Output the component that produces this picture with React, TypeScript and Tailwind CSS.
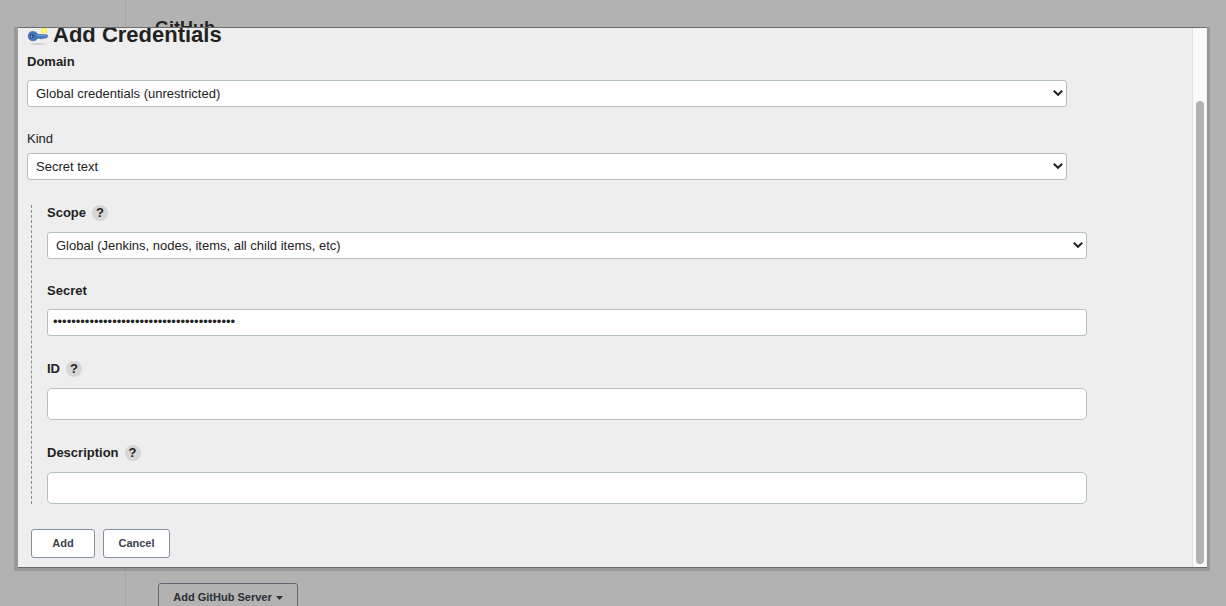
import React from 'react';

interface HelpButtonProps {
  topic: string;
}

const HelpButton: React.FC<HelpButtonProps> = ({ topic }) => (
  <button
    type="button"
    aria-label={`Help for feature: ${topic}`}
    className="w-4 h-4 rounded-full bg-[#d6d6d6] text-[13px] leading-4 font-bold text-center"
  >
    ?
  </button>
);

interface SelectFieldProps {
  id: string;
  options: string[];
}

const SelectField: React.FC<SelectFieldProps> = ({ id, options }) => (
  <div className="relative">
    <select
      id={id}
      className="block w-full h-[27px] appearance-none rounded-[3px] border border-[#b3bfc5] bg-white pl-2 pr-6 text-[13px] leading-4"
    >
      {options.map(option => (
        <option key={option}>{option}</option>
      ))}
    </select>
    <svg
      className="pointer-events-none absolute right-1 top-[10px] w-[10px] h-[7px]"
      viewBox="0 0 10 7"
      fill="none"
      stroke="#222"
      strokeWidth="2"
    >
      <path d="M0.8 0.8 L5 4.8 L9.2 0.8" />
    </svg>
  </div>
);

interface FieldLabelProps {
  htmlFor: string;
  text: string;
  help?: boolean;
}

const FieldLabel: React.FC<FieldLabelProps> = ({ htmlFor, text, help }) => (
  <div className="flex items-center gap-1.5 h-4">
    <label htmlFor={htmlFor} className="text-[13px] leading-4 font-bold">{text}</label>
    {help && <HelpButton topic={text} />}
  </div>
);

const KeyIcon = () => (
  <svg className="w-[22px] h-[22px] flex-shrink-0" viewBox="0 0 22 22">
    <ellipse cx="11" cy="20" rx="8" ry="0.7" fill="#c8c8c8" />
    <circle cx="17" cy="6.6" r="3" fill="#fdf04a" />
    <circle cx="17" cy="6.6" r="1.2" fill="#fffbb8" />
    <path
      d="M5.8 7.4 C3 7.4 1.2 9.4 1.2 12 C1.2 14.8 3 16.8 5.8 16.8 C8.2 16.8 9.8 15.6 10.6 14.2 L12.2 14.2 L13.2 15 L14.4 14.2 L15.6 14.8 L16.8 14 L19.4 14 L20.8 12.4 L20.2 10.8 L10.6 10.4 C9.8 8.6 8.2 7.4 5.8 7.4 Z"
      fill="#4476bb"
      stroke="#32609f"
      strokeWidth="0.6"
    />
    <path d="M10.4 11.6 L19.8 11.8" stroke="#7fa6da" strokeWidth="0.9" />
    <circle cx="4.8" cy="12.2" r="1.9" fill="#1e3c6c" />
    <circle cx="4.6" cy="12.4" r="0.9" fill="#a9b9cf" />
  </svg>
);

const AddCredentialsDialog = () => (
  <div
    role="dialog"
    aria-labelledby="dialog-title"
    className="absolute left-[14px] right-4 top-[27px] bg-[#999] pl-1 pr-[3px] pb-[3px]"
  >
    <div className="flex border-y border-[#6b6b6b] bg-[#eee] overflow-hidden">
      <form className="flex-1 min-w-0 pl-[9px] pb-[9px]" onSubmit={e => e.preventDefault()}>
        <div className="flex items-center gap-1 h-5 -mt-[3px]">
          <KeyIcon />
          <h1 id="dialog-title" className="text-[22px] leading-5 font-bold">Add Credentials</h1>
        </div>

        <div className="mt-[9px] mr-[125px]">
          <FieldLabel htmlFor="domain" text="Domain" />
          <div className="mt-[10px]">
            <SelectField id="domain" options={['Global credentials (unrestricted)']} />
          </div>
          <label htmlFor="kind" className="block mt-6 text-[13px] leading-4">Kind</label>
          <div className="mt-[6px]">
            <SelectField id="kind" options={['Secret text']} />
          </div>
        </div>

        <div className="mt-[25px] ml-1 mr-[105px] pl-[15px] border-l border-dashed border-[#8c8c8c]">
          <FieldLabel htmlFor="scope" text="Scope" help />
          <div className="mt-[11px]">
            <SelectField id="scope" options={['Global (Jenkins, nodes, items, all child items, etc)']} />
          </div>

          <div className="mt-6">
            <FieldLabel htmlFor="secret" text="Secret" />
            <input
              id="secret"
              type="password"
              autoComplete="off"
              defaultValue={'x'.repeat(40)}
              className="block w-full h-[27px] mt-[10px] rounded-[3px] border border-[#b3bfc5] bg-white px-[5px] pb-[2px] text-[13px]"
            />
          </div>

          <div className="mt-[25px]">
            <FieldLabel htmlFor="credential-id" text="ID" help />
            <input
              id="credential-id"
              type="text"
              className="block w-full h-8 mt-[11px] rounded-[5px] border border-[#b3bfc5] bg-white px-2 text-[13px]"
            />
          </div>

          <div className="mt-[25px]">
            <FieldLabel htmlFor="description" text="Description" help />
            <input
              id="description"
              type="text"
              className="block w-full h-8 mt-[11px] rounded-[5px] border border-[#b3bfc5] bg-white px-2 text-[13px]"
            />
          </div>
        </div>

        <div className="flex gap-2 mt-[25px] ml-1">
          <button
            type="submit"
            className="w-16 h-[29px] rounded-[3px] border border-[#8591a0] bg-white text-[11px] font-bold text-[#3b434d]"
          >
            Add
          </button>
          <button
            type="button"
            className="w-[67px] h-[29px] rounded-[3px] border border-[#8591a0] bg-white text-[11px] font-bold text-[#3b434d]"
          >
            Cancel
          </button>
        </div>
      </form>

      {/* Scrollbar */}
      <div className="flex w-[15px] flex-shrink-0 border-l border-r border-l-[#e1e1e1] border-r-[#ededed] bg-[#fafafa] pl-[3px] pr-[2px] pt-[73px] pb-[3px]">
        <div className="w-2 rounded-full bg-[#b3b3b3]" />
      </div>
    </div>
  </div>
);

export default function App() {
  return (
    <div className="relative h-screen overflow-hidden bg-[#b2b2b2] font-['Liberation_Sans',Arial,sans-serif] text-[#222]">
      <div className="flex min-h-full">
        <aside className="w-[125px] flex-shrink-0" />
        <main className="flex-1 border-l border-[#a6a6a6] pl-[29px] pt-[18px]">
          <h2 className="text-[18px] leading-5 font-bold">GitHub</h2>
          <button
            type="button"
            className="flex items-center justify-center gap-1 w-[140px] h-[29px] mt-[545px] ml-[3px] rounded-[3px] border border-[#5f6871] text-[11px] font-bold text-[#2a3037]"
          >
            Add GitHub Server
            <svg className="w-[7px] h-1" viewBox="0 0 7 4" fill="currentColor">
              <path d="M0 0 H7 L3.5 4 Z" />
            </svg>
          </button>
        </main>
      </div>
      <AddCredentialsDialog />
    </div>
  );
}
